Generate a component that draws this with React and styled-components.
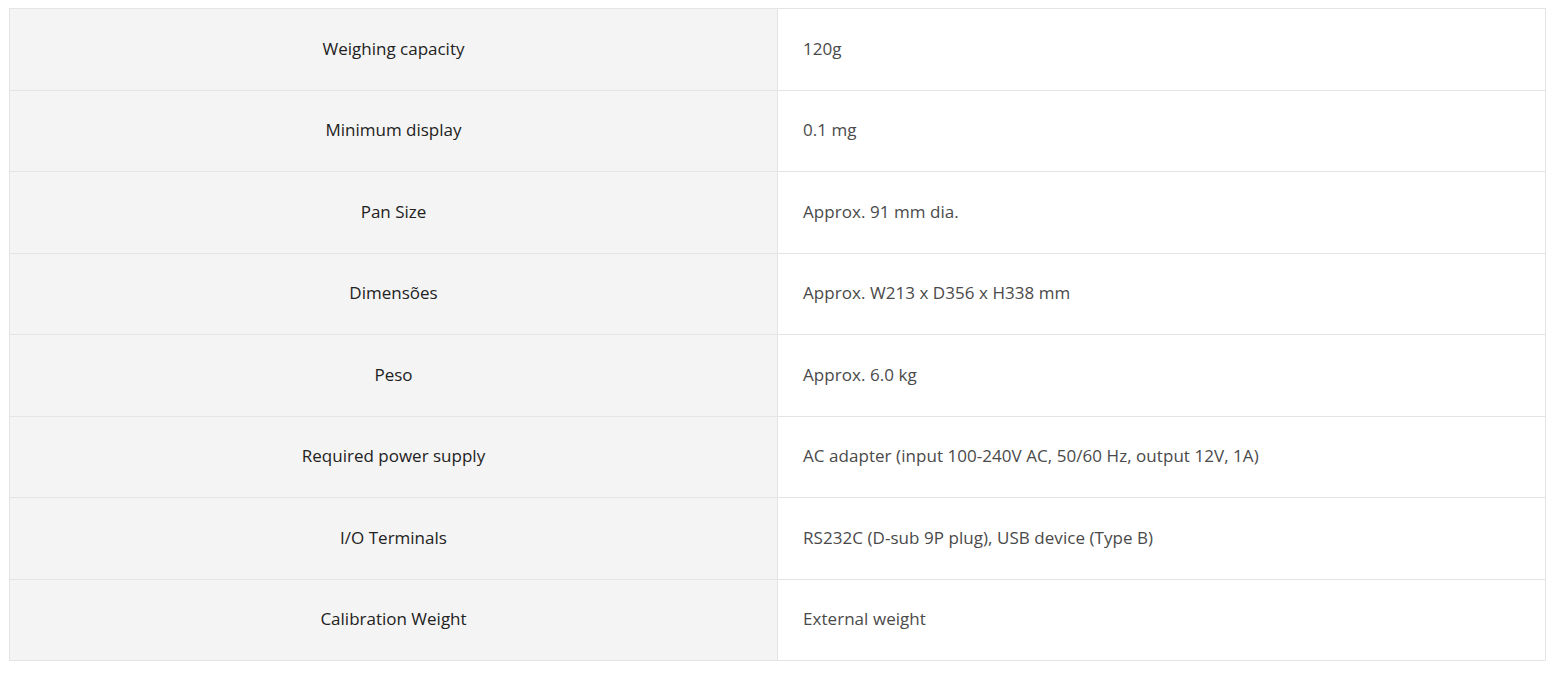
import React from "react";
import styled, { createGlobalStyle } from "styled-components";

const Global = createGlobalStyle`
  html, body { margin: 0; padding: 0; background: #fff; }
  body { font-family: "Open Sans", "Noto Sans", sans-serif; }
`;

const Wrap = styled.div`
  padding: 8px 10px 0 9px;
`;

const Table = styled.div`
  width: 1535px;
  border: 1px solid #e4e4e4;
  display: grid;
  grid-template-columns: 768px 1fr;
`;

const Label = styled.div`
  box-sizing: border-box;
  background: #f4f4f4;
  border-right: 1px solid #e4e4e4;
  border-bottom: ${(p) => (p.$last ? "none" : "1px solid #e4e4e4")};
  height: ${(p) => (p.$last ? "80.5px" : "81.5px")};
  padding-bottom: 2px;
  display: flex;
  align-items: center;
  justify-content: center;
  font-size: 17px;
  font-weight: 500;
  color: #222;
`;

const Value = styled.div`
  box-sizing: border-box;
  background: #fff;
  border-bottom: ${(p) => (p.$last ? "none" : "1px solid #e4e4e4")};
  height: ${(p) => (p.$last ? "80.5px" : "81.5px")};
  padding: 0 0 2px 25px;
  display: flex;
  align-items: center;
  font-size: 17px;
  font-weight: 400;
  letter-spacing: 0.05px;
  color: #4a4a4a;
`;

const rows = [
  ["Weighing capacity", "120g"],
  ["Minimum display", "0.1 mg"],
  ["Pan Size", "Approx. 91 mm dia."],
  ["Dimensões", "Approx. W213 x D356 x H338 mm"],
  ["Peso", "Approx. 6.0 kg"],
  ["Required power supply", "AC adapter (input 100-240V AC, 50/60 Hz, output 12V, 1A)"],
  ["I/O Terminals", "RS232C (D-sub 9P plug), USB device (Type B)"],
  ["Calibration Weight", "External weight"],
];

export default function App() {
  return (
    <>
      <Global />
      <Wrap>
        <Table>
          {rows.map(([k, v], i) => (
            <React.Fragment key={k}>
              <Label $last={i === rows.length - 1}>{k}</Label>
              <Value $last={i === rows.length - 1}>{v}</Value>
            </React.Fragment>
          ))}
        </Table>
      </Wrap>
    </>
  );
}
